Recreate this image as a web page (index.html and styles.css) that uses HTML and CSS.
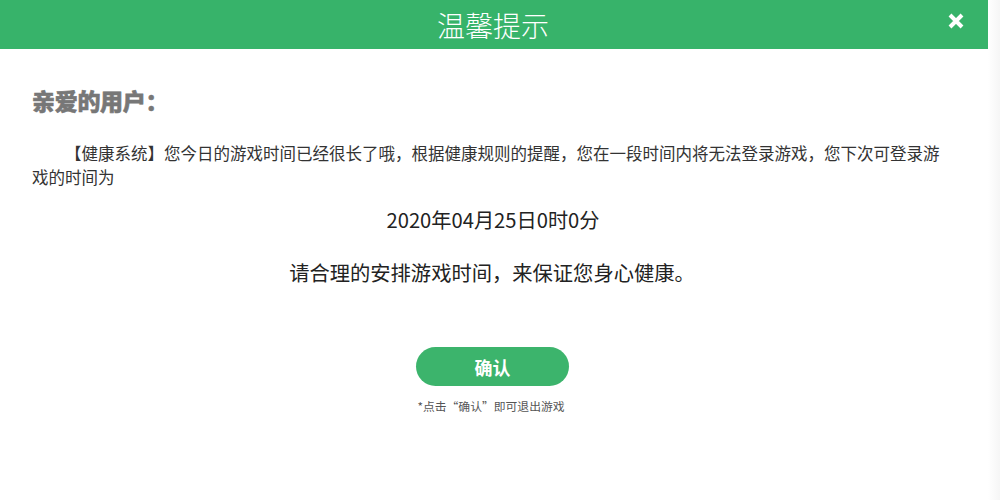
FILE: index.html
```html
<!DOCTYPE html>
<html lang="zh-CN">
<head>
<meta charset="utf-8">
<title>温馨提示</title>
<link rel="stylesheet" href="styles.css">
</head>
<body>
<div class="page">
  <div class="dialog">
    <div class="header">
      <div class="title">温馨提示</div>
      <button class="close" aria-label="关闭">
        <svg width="18" height="16" viewBox="0 0 18 16"><path d="M3 2 L15 14 M15 2 L3 14" stroke="#fff" stroke-width="4" stroke-linecap="butt" fill="none"/></svg>
      </button>
    </div>
    <div class="content">
      <div class="greeting">亲爱的用户：</div>
      <p class="message">【健康系统】您今日的游戏时间已经很长了哦，根据健康规则的提醒，您在一段时间内将无法登录游戏，您下次可登录游戏的时间为</p>
      <div class="date">2020年04月25日0时0分</div>
      <div class="advice">请合理的安排游戏时间，来保证您身心健康。</div>
      <div class="actions">
        <button class="confirm">确认</button>
        <div class="note">*点击“确认”即可退出游戏</div>
      </div>
    </div>
  </div>
  <div class="edge"></div>
</div>
</body>
</html>
```
FILE: styles.css
```css
html, body {
  margin: 0;
  padding: 0;
  background: #ffffff;
}
body {
  font-family: "Noto Sans CJK SC", "Noto Sans", sans-serif;
  color: #333;
}
.page {
  display: flex;
  width: 1000px;
  height: 500px;
  overflow: hidden;
}
.dialog {
  width: 988px;
  flex: none;
}
.edge {
  flex: 1;
  background: linear-gradient(to right, #ffffff, #f6f6f6);
}
.header {
  position: relative;
  height: 49px;
  background: #37b36a;
  display: flex;
  align-items: center;
  justify-content: center;
}
.title {
  color: #fff;
  font-size: 28px;
  font-weight: 300;
  line-height: 49px;
  margin-left: -2px;
  padding-top: 1px;
}
.close {
  position: absolute;
  right: 23px;
  top: 13px;
  width: 18px;
  height: 16px;
  padding: 0;
  border: 0;
  background: transparent;
  display: flex;
}
.content {
  padding: 36px 0 0 32px;
}
.greeting {
  font-size: 23px;
  font-weight: 900;
  color: #777777;
  line-height: 30px;
  letter-spacing: -0.3px;
  -webkit-text-stroke: 0.6px #777777;
}
.message {
  margin: 26px 0 0 0;
  width: 915px;
  font-size: 16.5px;
  line-height: 24px;
  text-indent: 2em;
  color: #333;
}
.date {
  margin: 16px 0 0 -34px;
  text-align: center;
  font-size: 20.2px;
  line-height: 30px;
  color: #222;
}
.advice {
  margin: 22px 0 0 -36px;
  text-align: center;
  font-size: 20.3px;
  line-height: 30px;
  color: #222;
}
.actions {
  margin: 60px 0 0 -32px;
  display: flex;
  flex-direction: column;
  align-items: center;
}
.confirm {
  width: 153px;
  height: 39px;
  border: 0;
  border-radius: 20px;
  background: #3cb46c;
  color: #fff;
  font-family: "Noto Sans CJK SC", sans-serif;
  font-size: 18px;
  font-weight: 700;
  padding: 0;
  margin-left: -3px;
}
.note {
  margin-top: 12px;
  margin-left: -6px;
  font-size: 11.8px;
  line-height: 16px;
  color: #555;
}
```
